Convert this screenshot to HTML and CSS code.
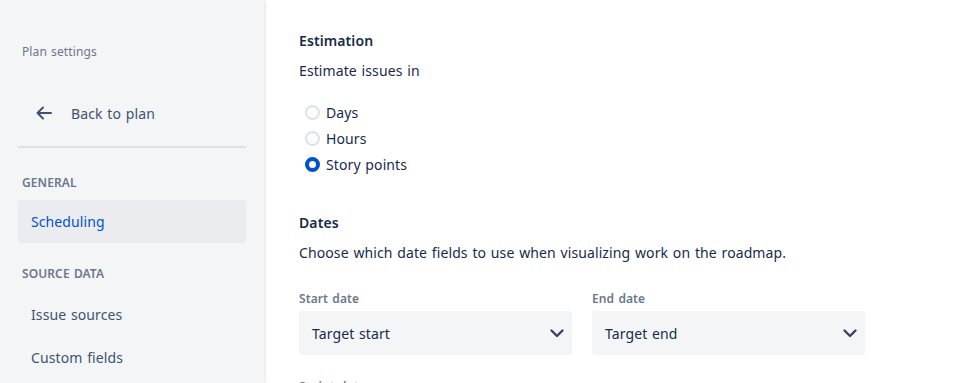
FILE: index.html
```html
<!DOCTYPE html>
<html lang="en">
<head>
    <meta charset="UTF-8">
    <title>Plan settings - Scheduling</title>
    <link rel="stylesheet" href="styles.css">
</head>
<body>
    <div class="layout">
        <div class="sidebar">
            <div class="sidebar-title">Plan settings</div>
            <a class="back-link" href="#">
                <svg width="24" height="24" viewBox="0 0 24 24"><path d="M19 12H6M11 6.5 5.5 12l5.5 5.5" fill="none" stroke="#42526e" stroke-width="2" stroke-linecap="round" stroke-linejoin="round"/></svg>
                <span>Back to plan</span>
            </a>
            <div class="divider"></div>
            <div class="nav-group">General</div>
            <a class="nav-item active" href="#">Scheduling</a>
            <div class="nav-group">Source data</div>
            <a class="nav-item" href="#">Issue sources</a>
            <a class="nav-item" href="#">Custom fields</a>
        </div>

        <div class="content">
            <h3>Estimation</h3>
            <p class="desc">Estimate issues in</p>
            <div class="radios">
                <label class="radio"><span class="dot"></span>Days</label>
                <label class="radio"><span class="dot"></span>Hours</label>
                <label class="radio"><span class="dot checked"></span>Story points</label>
            </div>

            <h3>Dates</h3>
            <p class="desc">Choose which date fields to use when visualizing work on the roadmap.</p>
            <div class="fields">
                <div class="field">
                    <div class="field-label">Start date</div>
                    <div class="select">
                        <span>Target start</span>
                        <svg width="24" height="24" viewBox="0 0 24 24"><path d="M6.5 9.5l5.5 5.5 5.5-5.5" fill="none" stroke="#344563" stroke-width="2.4" stroke-linecap="round" stroke-linejoin="round"/></svg>
                    </div>
                </div>
                <div class="field">
                    <div class="field-label">End date</div>
                    <div class="select">
                        <span>Target end</span>
                        <svg width="24" height="24" viewBox="0 0 24 24"><path d="M6.5 9.5l5.5 5.5 5.5-5.5" fill="none" stroke="#344563" stroke-width="2.4" stroke-linecap="round" stroke-linejoin="round"/></svg>
                    </div>
                </div>
            </div>
            <div class="field-label next">Sprint dates</div>
        </div>
    </div>
</body>
</html>
```

FILE: styles.css
```css
body {
    margin: 0;
    font-family: "Noto Sans", "Open Sans", sans-serif;
    font-size: 14px;
    letter-spacing: 0.1px;
    word-spacing: 1px;
    color: #172b4d;
    background: #fff;
    overflow: hidden;
}
.layout {
    display: flex;
    height: 383px;
}
.sidebar {
    width: 228px;
    flex-shrink: 0;
    background: #f4f5f7;
    padding: 0 18px;
    box-shadow: 1px 0 3px rgba(9, 30, 66, 0.13);
}
.sidebar-title {
    font-size: 12px;
    color: #6b778c;
    padding: 43px 4px 0;
    height: 48px;
}
.back-link {
    display: flex;
    align-items: center;
    gap: 15px;
    height: 44px;
    padding-left: 14px;
    color: #42526e;
    text-decoration: none;
    font-size: 14px;
}
.divider {
    height: 2px;
    background: #dfe1e6;
    margin-top: 11px;
}
.nav-group {
    font-size: 12px;
    font-weight: 600;
    text-transform: uppercase;
    color: #6b778c;
    padding: 27px 4px 9px;
    line-height: 16px;
}
.nav-item + .nav-group {
    padding-top: 23px;
    padding-bottom: 11px;
}
.nav-item {
    display: flex;
    align-items: center;
    height: 43px;
    padding-left: 13px;
    border-radius: 3px;
    font-size: 14px;
    color: #42526e;
    text-decoration: none;
}
.nav-item.active {
    background: #ebecf0;
    color: #0052cc;
}
.content {
    padding: 30px 35px 0;
}
h3 {
    margin: 0;
    font-size: 14px;
    font-weight: 600;
    line-height: 22px;
}
.desc {
    margin: 9px 0 0;
    line-height: 20px;
}
.radios {
    padding: 18px 0 0 6px;
    margin-bottom: 35px;
}
.radio {
    display: flex;
    align-items: center;
    gap: 6px;
    height: 26px;
    font-size: 14px;
}
.dot {
    box-sizing: border-box;
    width: 15px;
    height: 15px;
    border-radius: 50%;
    border: 2px solid #dfe1e6;
    background: #fafbfc;
}
.dot.checked {
    border: 4px solid #0052cc;
    background: #fff;
}
.fields {
    display: flex;
    gap: 20px;
    margin-top: 28px;
}
.field {
    width: 273px;
}
.field-label {
    font-size: 12px;
    font-weight: 600;
    color: #6b778c;
    line-height: 16px;
    margin-bottom: 4px;
}
.field-label.next {
    margin-top: 24px;
}
.select {
    display: flex;
    justify-content: space-between;
    align-items: center;
    height: 44px;
    padding: 0 3px 0 13px;
    background: #f4f5f7;
    border-radius: 3px;
    font-size: 14px;
}
```
